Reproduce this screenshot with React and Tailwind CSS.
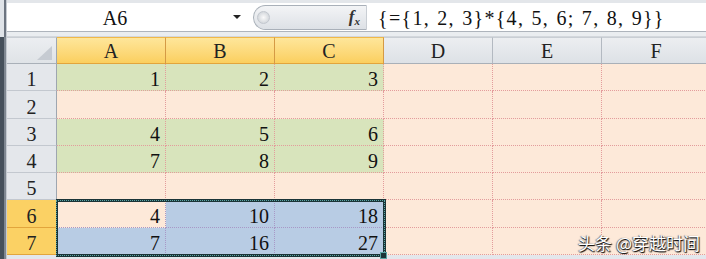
import React from "react";

const COLS = ["A", "B", "C", "D", "E", "F"];
const ROWS = [1, 2, 3, 4, 5, 6, 7];
const DATA = {
  1: { A: "1", B: "2", C: "3" },
  3: { A: "4", B: "5", C: "6" },
  4: { A: "7", B: "8", C: "9" },
  6: { A: "4", B: "10", C: "18" },
  7: { A: "7", B: "16", C: "27" },
};

function cellClass(row, col) {
  const inABC = col === "A" || col === "B" || col === "C";
  if (inABC && (row === 1 || row === 3 || row === 4)) {
    return "bg-[#d8e4bc] border-[#e39c9c]";
  }
  if (inABC && (row === 7 || (row === 6 && col !== "A"))) {
    return "bg-[#b8cce4] border-[#a898c6]";
  }
  if (inABC && row === 6) {
    return "bg-[#fde9d9] border-[#a898c6]";
  }
  return "bg-[#fde9d9] border-[#e39c9c]";
}

function Cell({ row, col }) {
  const v = DATA[row] && DATA[row][col];
  return (
    <div
      className={
        "w-[109px] shrink-0 h-full border-r border-b border-dotted flex items-end justify-end pr-[5px] leading-none " +
        cellClass(row, col)
      }
    >
      {v ? <span className="mb-[1px]">{v}</span> : null}
    </div>
  );
}

function RowHeader({ row }) {
  const sel = row === 6 || row === 7;
  return (
    <div
      className={
        sel
          ? "w-[50px] shrink-0 h-full flex items-end justify-center leading-none bg-[#fbd164] border-r border-b border-[#e2a53c]"
          : "w-[50px] shrink-0 h-full flex items-end justify-center leading-none bg-[#e4e7eb] border-r border-r-[#9ea6b0] border-b border-b-[#c3c8cf]"
      }
    >
      <span className="mb-[1px] text-[#222]">{row}</span>
    </div>
  );
}

function ColHeader({ col }) {
  const sel = col === "A" || col === "B" || col === "C";
  return (
    <div
      className={
        sel
          ? "w-[109px] shrink-0 h-full flex items-end justify-center leading-none bg-linear-to-b from-[#fee69a] to-[#fbcf5e] border-t border-t-[#f0b849] border-r border-r-[#d59a45] border-b border-b-[#e2a53c]"
          : "w-[109px] shrink-0 h-full flex items-end justify-center leading-none bg-linear-to-b from-[#eceef1] to-[#dde1e6] border-t border-t-[#c9ced4] border-r border-r-[#b3b9c1] border-b border-b-[#a9b0b8]"
      }
    >
      <span className="mb-[2px] text-[#222]">{col}</span>
    </div>
  );
}

export default function App() {
  return (
    <div className="relative w-[706px] h-[259px] overflow-hidden flex bg-[#e3e7ec] [font-family:'Liberation_Serif',serif] text-[20px] text-[#111]">
      {/* left window edge */}
      <div className="w-[7px] shrink-0 h-full flex flex-col">
        <div className="h-[37px] flex">
          <div className="w-[4px] bg-[#dfe3e8]" />
          <div className="w-[2px] bg-[#6c7480]" />
          <div className="w-[1px] bg-[#c5cad1]" />
        </div>
        <div className="flex-1 flex">
          <div className="w-[4px] bg-[#46505b]" />
          <div className="w-[2px] bg-[#7f8791]" />
          <div className="w-[1px] bg-[#c5cad1]" />
        </div>
      </div>

      <div className="flex-1 flex flex-col min-w-0">
        {/* formula bar */}
        <div className="h-[37px] shrink-0 flex flex-col">
          <div className="h-[3px] bg-[#e3e6ea]" />
          <div className="h-[28px] bg-white flex items-center">
            <div className="w-[216px] text-center leading-none pt-[1px]">A6</div>
            <div className="ml-[10px] w-0 h-0 border-l-[4px] border-r-[4px] border-t-[4px] border-l-transparent border-r-transparent border-t-[#222]" />
            <div className="ml-[12px] w-[114px] h-[25px] rounded-l-full border border-[#a9b0b9] border-r-[#c9ced4] bg-linear-to-b from-[#f3f4f6] to-[#dde1e6] flex items-center justify-between pl-[3px] pr-[6px]">
              <div className="w-[13px] h-[13px] rounded-full bg-radial from-[#fafafa] to-[#c7ccd2] border border-[#c2c7ce]" />
              <span className="italic font-bold text-[17px] leading-none text-[#333]">
                f<span className="text-[11px] align-[-3px]">x</span>
              </span>
            </div>
            <div className="ml-[11px] leading-none pt-[1px] tracking-[1.3px] [word-spacing:1px] whitespace-nowrap">
              {"{={1, 2, 3}*{4, 5, 6; 7, 8, 9}}"}
            </div>
          </div>
          <div className="h-[6px] flex flex-col">
            <div className="h-[1px] bg-[#aeb4bc]" />
            <div className="flex-1 bg-[#eaedf0]" />
            <div className="h-[1px] bg-[#d3d7dc]" />
          </div>
        </div>

        {/* grid */}
        <div className="flex flex-col">
          <div className="h-[27px] shrink-0 flex">
            <div className="w-[50px] shrink-0 h-full relative bg-linear-to-b from-[#eceef1] to-[#dfe3e7] border-t border-t-[#c9ced4] border-r border-r-[#9ea6b0] border-b border-b-[#a9b0b8]">
              <svg className="absolute right-[4px] bottom-[3px]" width="15" height="14" viewBox="0 0 15 14">
                <polygon points="15,0 15,14 0,14" fill="#c6cbd2" />
              </svg>
            </div>
            {COLS.map((c) => (
              <ColHeader key={c} col={c} />
            ))}
          </div>
          {ROWS.map((r) => (
            <div key={r} className="h-[27.3px] shrink-0 flex">
              <RowHeader row={r} />
              {COLS.map((c) => (
                <Cell key={c} row={r} col={c} />
              ))}
            </div>
          ))}
        </div>
      </div>

      {/* selection border A6:C7 */}
      <div className="absolute left-[56px] top-[199px] w-[330px] h-[58px] border-[3px] border-l-[2px] border-[#1b3437]">
        <div className="absolute -inset-[2px] border border-dotted border-[#5aa6a5]" />
      </div>
      <div className="absolute left-[380px] top-[252px] w-[7px] h-[7px] bg-[#1b3437] border border-[#5aa6a5]" />

      {/* watermark */}
      <div className="absolute right-[6px] bottom-[8px] [font-family:'Noto_Sans_CJK_SC',sans-serif] text-[17px] leading-none text-white [text-shadow:1px_1px_1px_rgba(0,0,0,0.9),-1px_0_1px_rgba(0,0,0,0.5),0_1px_1px_rgba(0,0,0,0.6)] whitespace-nowrap">
        头条 @穿越时间
      </div>
    </div>
  );
}
